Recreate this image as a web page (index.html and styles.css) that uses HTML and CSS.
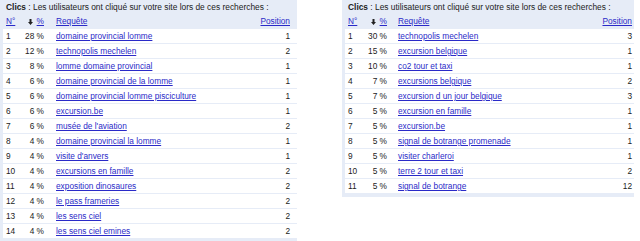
FILE: index.html
```html
<!DOCTYPE html>
<html lang="fr">
<head>
<meta charset="utf-8">
<link rel="stylesheet" href="styles.css">
</head>
<body>
<div class="page">
  <div class="panel panel-left">
    <div class="title"><b>Clics</b> : Les utilisateurs ont cliqué sur votre site lors de ces recherches :</div>
    <div class="row head">
      <span class="c-n"><a href="#">N°</a></span>
      <span class="c-p"><svg class="arrow" width="5" height="6" viewBox="0 0 5 6"><path d="M1.5 0h2v3h1.5L2.5 6 0 3h1.5z" fill="#222"/></svg> <a href="#">%</a></span>
      <span class="c-q"><a href="#">Requête</a></span>
      <span class="c-pos"><a href="#">Position</a></span>
    </div>
    <div class="row"><span class="c-n">1</span><span class="c-p">28 %</span><span class="c-q"><a href="#">domaine provincial lomme</a></span><span class="c-pos">1</span></div>
    <div class="row"><span class="c-n">2</span><span class="c-p">12 %</span><span class="c-q"><a href="#">technopolis mechelen</a></span><span class="c-pos">2</span></div>
    <div class="row"><span class="c-n">3</span><span class="c-p">8 %</span><span class="c-q"><a href="#">lomme domaine provincial</a></span><span class="c-pos">1</span></div>
    <div class="row"><span class="c-n">4</span><span class="c-p">6 %</span><span class="c-q"><a href="#">domaine provincial de la lomme</a></span><span class="c-pos">1</span></div>
    <div class="row"><span class="c-n">5</span><span class="c-p">6 %</span><span class="c-q"><a href="#">domaine provincial lomme pisciculture</a></span><span class="c-pos">1</span></div>
    <div class="row"><span class="c-n">6</span><span class="c-p">6 %</span><span class="c-q"><a href="#">excursion.be</a></span><span class="c-pos">1</span></div>
    <div class="row"><span class="c-n">7</span><span class="c-p">6 %</span><span class="c-q"><a href="#">musée de l'aviation</a></span><span class="c-pos">2</span></div>
    <div class="row"><span class="c-n">8</span><span class="c-p">4 %</span><span class="c-q"><a href="#">domaine provincial la lomme</a></span><span class="c-pos">1</span></div>
    <div class="row"><span class="c-n">9</span><span class="c-p">4 %</span><span class="c-q"><a href="#">visite d'anvers</a></span><span class="c-pos">1</span></div>
    <div class="row"><span class="c-n">10</span><span class="c-p">4 %</span><span class="c-q"><a href="#">excursions en famille</a></span><span class="c-pos">2</span></div>
    <div class="row"><span class="c-n">11</span><span class="c-p">4 %</span><span class="c-q"><a href="#">exposition dinosaures</a></span><span class="c-pos">2</span></div>
    <div class="row"><span class="c-n">12</span><span class="c-p">4 %</span><span class="c-q"><a href="#">le pass frameries</a></span><span class="c-pos">2</span></div>
    <div class="row"><span class="c-n">13</span><span class="c-p">4 %</span><span class="c-q"><a href="#">les sens ciel</a></span><span class="c-pos">2</span></div>
    <div class="row"><span class="c-n">14</span><span class="c-p">4 %</span><span class="c-q"><a href="#">les sens ciel emines</a></span><span class="c-pos">2</span></div>
  </div>
  <div class="panel panel-right">
    <div class="title"><b>Clics</b> : Les utilisateurs ont cliqué sur votre site lors de ces recherches :</div>
    <div class="row head">
      <span class="c-n"><a href="#">N°</a></span>
      <span class="c-p"><svg class="arrow" width="5" height="6" viewBox="0 0 5 6"><path d="M1.5 0h2v3h1.5L2.5 6 0 3h1.5z" fill="#222"/></svg> <a href="#">%</a></span>
      <span class="c-q"><a href="#">Requête</a></span>
      <span class="c-pos"><a href="#">Position</a></span>
    </div>
    <div class="row"><span class="c-n">1</span><span class="c-p">30 %</span><span class="c-q"><a href="#">technopolis mechelen</a></span><span class="c-pos">3</span></div>
    <div class="row"><span class="c-n">2</span><span class="c-p">15 %</span><span class="c-q"><a href="#">excursion belgique</a></span><span class="c-pos">1</span></div>
    <div class="row"><span class="c-n">3</span><span class="c-p">10 %</span><span class="c-q"><a href="#">co2 tour et taxi</a></span><span class="c-pos">1</span></div>
    <div class="row"><span class="c-n">4</span><span class="c-p">7 %</span><span class="c-q"><a href="#">excursions belgique</a></span><span class="c-pos">2</span></div>
    <div class="row"><span class="c-n">5</span><span class="c-p">7 %</span><span class="c-q"><a href="#">excursion d un jour belgique</a></span><span class="c-pos">3</span></div>
    <div class="row"><span class="c-n">6</span><span class="c-p">5 %</span><span class="c-q"><a href="#">excursion en famille</a></span><span class="c-pos">1</span></div>
    <div class="row"><span class="c-n">7</span><span class="c-p">5 %</span><span class="c-q"><a href="#">excursion.be</a></span><span class="c-pos">1</span></div>
    <div class="row"><span class="c-n">8</span><span class="c-p">5 %</span><span class="c-q"><a href="#">signal de botrange promenade</a></span><span class="c-pos">1</span></div>
    <div class="row"><span class="c-n">9</span><span class="c-p">5 %</span><span class="c-q"><a href="#">visiter charleroi</a></span><span class="c-pos">1</span></div>
    <div class="row"><span class="c-n">10</span><span class="c-p">5 %</span><span class="c-q"><a href="#">terre 2 tour et taxi</a></span><span class="c-pos">2</span></div>
    <div class="row"><span class="c-n">11</span><span class="c-p">5 %</span><span class="c-q"><a href="#">signal de botrange</a></span><span class="c-pos">12</span></div>
  </div>
</div>
</body>
</html>
```
FILE: styles.css
```css
html, body {
  margin: 0;
  padding: 0;
  background: #fff;
}
body {
  font-family: "Liberation Sans", Arial, sans-serif;
  font-size: 8.3px;
  color: #222;
}
a {
  color: #2a2ac8;
  text-decoration: underline;
}
.page {
  display: flex;
  align-items: flex-start;
  gap: 45px;
}
.panel {
  background: #e6ecf7;
  padding-left: 3px;
  padding-bottom: 3px;
}
.panel-left {
  width: 294px;
}
.panel-right {
  width: 289px;
}
.title {
  height: 14px;
  line-height: 14px;
  padding-left: 3px;
  font-size: 8.4px;
  white-space: nowrap;
}
.row {
  display: grid;
  grid-template-columns: 14px 24px 1fr auto;
  align-items: center;
  height: 14px;
  line-height: 14px;
  background: #fff;
  border-bottom: 1px solid #e6ecf7;
  padding: 0 7px 0 3px;
  white-space: nowrap;
}
.panel-right .row {
  padding-right: 2px;
  grid-template-columns: 14px 25px 1fr auto;
}
.row.head {
  background: transparent;
  border-bottom: 1px solid transparent;
  height: 14px;
}
.c-p {
  text-align: right;
}
.c-q {
  padding-left: 12px;
}
.panel-right .c-q {
  padding-left: 11px;
}
.c-pos {
  text-align: right;
}
.arrow {
  vertical-align: -1px;
  margin-right: 1px;
}
```
